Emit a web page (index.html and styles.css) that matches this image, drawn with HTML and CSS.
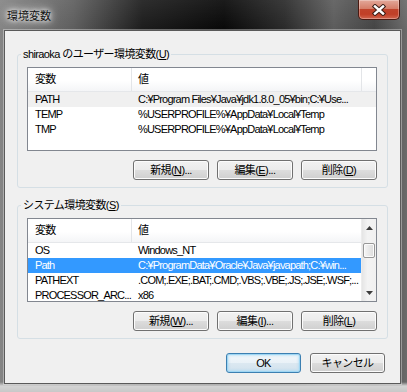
FILE: index.html
```html
<!DOCTYPE html>
<html lang="ja">
<head>
  <meta charset="UTF-8">
  <title>環境変数</title>
  <link rel="stylesheet" href="styles.css">
</head>
<body>
  <div class="window">
    <div class="titlebar">
      <span class="title">環境変数</span>
      <button class="close" aria-label="閉じる">
        <svg width="14" height="12" viewBox="0 0 14 12">
          <path d="M3 2.5 L11 9.5 M11 2.5 L3 9.5" stroke="#3b1d16" stroke-width="4.4" stroke-linecap="square"/>
          <path d="M3 2.5 L11 9.5 M11 2.5 L3 9.5" stroke="#fff" stroke-width="2.4" stroke-linecap="square"/>
        </svg>
      </button>
    </div>

    <div class="client">
      <!-- user variables -->
      <fieldset class="group">
        <legend>shiraoka のユーザー環境変数(<u>U</u>)</legend>
        <div class="list">
          <div class="list-main">
            <div class="row head"><span>変数</span><span>値</span><span></span></div>
            <div class="row dim"><span>PATH</span><span>C:¥Program Files¥Java¥jdk1.8.0_05¥bin;C:¥Use...</span></div>
            <div class="row"><span>TEMP</span><span>%USERPROFILE%¥AppData¥Local¥Temp</span></div>
            <div class="row"><span>TMP</span><span>%USERPROFILE%¥AppData¥Local¥Temp</span></div>
          </div>
        </div>
        <div class="buttons">
          <button class="btn">新規(<u>N</u>)...</button>
          <button class="btn">編集(<u>E</u>)...</button>
          <button class="btn">削除(<u>D</u>)</button>
        </div>
      </fieldset>

      <!-- system variables -->
      <fieldset class="group">
        <legend>システム環境変数(<u>S</u>)</legend>
        <div class="list">
          <div class="list-main">
            <div class="row head"><span>変数</span><span>値</span></div>
            <div class="row"><span>OS</span><span>Windows_NT</span></div>
            <div class="row selected"><span>Path</span><span>C:¥ProgramData¥Oracle¥Java¥javapath;C:¥win...</span></div>
            <div class="row"><span>PATHEXT</span><span>.COM;.EXE;.BAT;.CMD;.VBS;.VBE;.JS;.JSE;.WSF;...</span></div>
            <div class="row"><span>PROCESSOR_ARC...</span><span>x86</span></div>
          </div>
          <div class="scrollbar">
            <div class="sb-arrow"><svg width="7" height="4" viewBox="0 0 7 4"><path d="M0 4 L3.5 0 L7 4 Z" fill="#3c3c3c"/></svg></div>
            <div class="sb-track"><div class="sb-thumb"></div></div>
            <div class="sb-arrow"><svg width="7" height="4" viewBox="0 0 7 4"><path d="M0 0 L7 0 L3.5 4 Z" fill="#3c3c3c"/></svg></div>
          </div>
        </div>
        <div class="buttons">
          <button class="btn">新規(<u>W</u>)...</button>
          <button class="btn">編集(<u>I</u>)...</button>
          <button class="btn">削除(<u>L</u>)</button>
        </div>
      </fieldset>

      <div class="dialog-buttons">
        <button class="btn default">OK</button>
        <button class="btn">キャンセル</button>
      </div>
    </div>
  </div>
</body>
</html>
```

FILE: styles.css
```css
* {
  box-sizing: border-box;
}
body {
  margin: 0;
  background: #202020;
}
.window {
  width: 407px;
  height: 392px;
  display: flex;
  flex-direction: column;
  background:
    linear-gradient(to bottom, rgba(210,210,210,0) 382px, #d4d4d4 386px, #c8c8c8 392px),
    linear-gradient(to bottom, rgba(255,255,255,0.08), rgba(255,255,255,0) 30px),
    linear-gradient(to right, #858585 0%, #5e5e5e 18%, #1c1c1c 35%, #080808 55%, #2a2a2a 70%, #5c5c5c 82%, #444 92%, #6a6a6a 100%);
}
.titlebar {
  height: 30px;
  display: flex;
  justify-content: space-between;
  align-items: flex-start;
}
.title {
  padding-left: 7px;
  font: 11px/30px "Noto Sans CJK JP", sans-serif;
  color: #111;
  text-shadow: 0 0 4px #fff, 0 0 8px rgba(255, 255, 255, 0.9), 0 0 12px rgba(255, 255, 255, 0.6);
}
.close {
  width: 42px;
  height: 20px;
  margin-right: 7px;
  padding: 0;
  border: 1px solid #4a1a12;
  border-top: none;
  border-radius: 0 0 5px 5px;
  background: linear-gradient(#e3a89a, #d57e69 45%, #c0432b 50%, #c13f27 75%, #d0654e);
  box-shadow: inset 0 0 0 1px rgba(255, 255, 255, 0.3);
  display: flex;
  align-items: center;
  justify-content: center;
}
.client {
  flex: 1;
  margin: 0 6px 8px 4px;
  padding: 15px 12px 0;
  background: #f0f0f0;
  border: 1px solid #5a5a5a;
  box-shadow: 0 0 0 1px rgba(255, 255, 255, 0.35);
  font: 11px/15px "Liberation Sans", "Noto Sans CJK JP", sans-serif;
  letter-spacing: -0.6px;
  color: #000;
}
.group {
  margin: 0;
  min-width: 0;
  padding: 5px 10px 7px 9px;
  border: 1px solid #d5dfe5;
  border-radius: 3px;
}
.group + .group {
  margin-top: 9px;
}
.group legend {
  margin-left: -6px;
  padding: 0 2px;
  line-height: 16px;
}
.list {
  height: 84px;
  display: flex;
  overflow: hidden;
  background: #fff;
  border: 1px solid #828790;
}
.list-main {
  flex: 1;
  min-width: 0;
}
.row {
  display: grid;
  grid-template-columns: 104px 230px 1fr;
  height: 15px;
  letter-spacing: -0.8px;
}
.row span {
  padding-left: 6px;
  white-space: nowrap;
  overflow: hidden;
}
.row span:first-child {
  padding-left: 7px;
}
.head {
  height: 24px;
  line-height: 23px;
  background: linear-gradient(#fff 55%, #f4f5f7);
  border-bottom: 1px solid #e5e7ea;
}
.head span {
  border-right: 1px solid #e3e5e8;
}
.head span:last-child {
  border-right: none;
}
.dim {
  background: #f0f0f0;
}
.selected {
  background: #3399ff;
  color: #fff;
}
.scrollbar {
  width: 15px;
  display: flex;
  flex-direction: column;
  background: linear-gradient(to right, #e5e5e5, #f3f3f3 40%, #f0f0f0);
  border-left: 1px solid #ececec;
}
.sb-arrow {
  height: 17px;
  display: flex;
  align-items: center;
  justify-content: center;
}
.sb-track {
  flex: 1;
  padding-top: 7px;
}
.sb-thumb {
  height: 15px;
  margin: 0 1px;
  border: 1px solid #979797;
  border-radius: 2px;
  background: linear-gradient(to right, #f6f6f6, #e8e8e8 50%, #dcdcdc);
  box-shadow: inset 0 0 0 1px #fbfbfb;
}
.buttons {
  display: flex;
  justify-content: flex-end;
  gap: 8px;
  margin-top: 9px;
}
.btn {
  width: 76px;
  height: 20px;
  padding: 0;
  border: 1px solid #707070;
  border-radius: 3px;
  background: linear-gradient(#f2f2f2, #ebebeb 50%, #dddddd 50%, #cfcfcf);
  box-shadow: inset 0 0 0 1px #fcfcfc;
  font: inherit;
  letter-spacing: inherit;
  color: #000;
}
.dialog-buttons {
  display: flex;
  justify-content: flex-end;
  gap: 9px;
  margin-top: 14px;
  padding-right: 3px;
}
.dialog-buttons .btn {
  width: 75px;
}
.btn.default {
  border-color: #3c7fb1;
  background: linear-gradient(#f3f8fb, #e9f1f7 50%, #dce8f1 50%, #d0e2ee);
  box-shadow: inset 0 0 0 1px #9fd6f3, inset 0 0 2px 2px rgba(160, 215, 245, 0.5);
}
```
